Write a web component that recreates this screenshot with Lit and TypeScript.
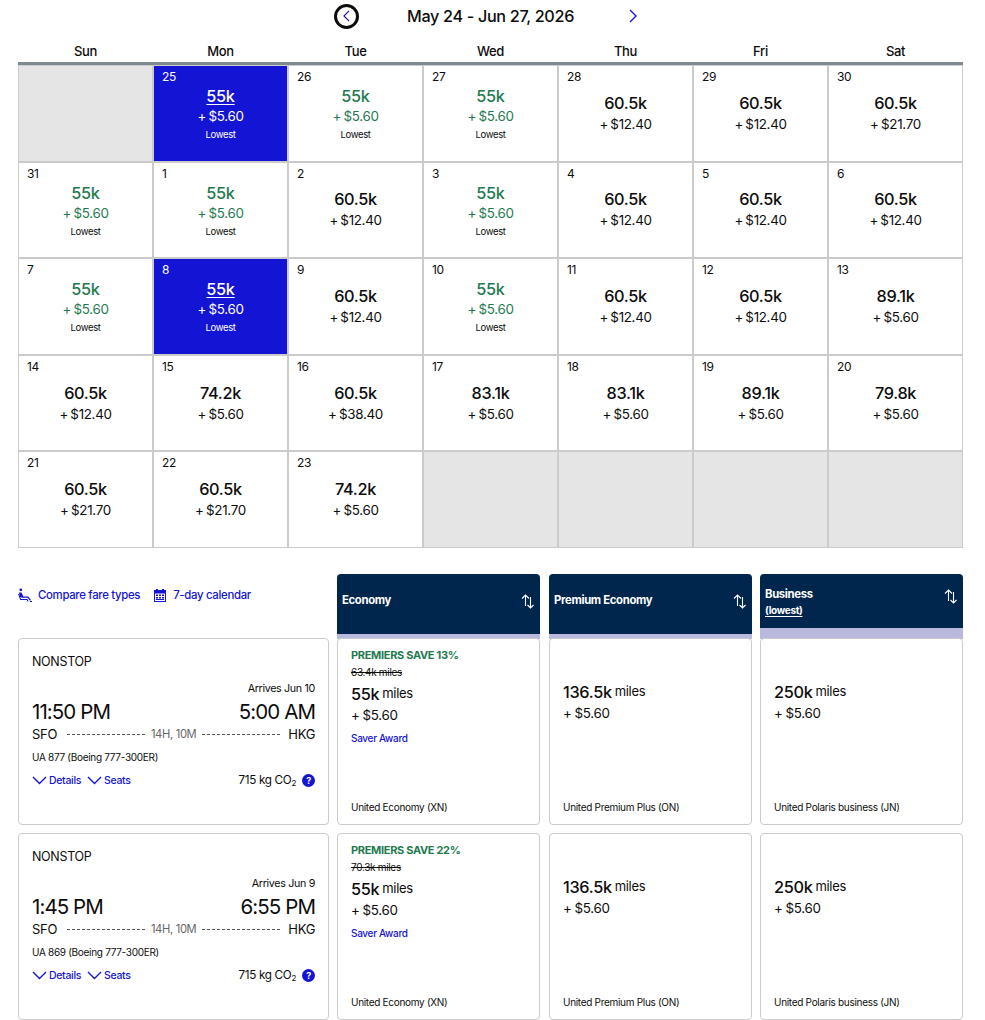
import { LitElement, html, css } from "lit";
import { customElement } from "lit/decorators.js";

type Day = { n: string; k?: string; p?: string; low?: boolean; sel?: boolean };
const d = (n: number | string, k: string, p: string, low = false, sel = false): Day => ({ n: String(n), k, p, low, sel });
const L = (n: number) => d(n, "55k", "+ $5.60", true);
const S = (n: number) => d(n, "55k", "+ $5.60", true, true);
const empty: Day = { n: "" };
const days: Day[] = [
  empty, S(25), L(26), L(27), d(28, "60.5k", "+ $12.40"), d(29, "60.5k", "+ $12.40"), d(30, "60.5k", "+ $21.70"),
  L(31), L(1), d(2, "60.5k", "+ $12.40"), L(3), d(4, "60.5k", "+ $12.40"), d(5, "60.5k", "+ $12.40"), d(6, "60.5k", "+ $12.40"),
  L(7), S(8), d(9, "60.5k", "+ $12.40"), L(10), d(11, "60.5k", "+ $12.40"), d(12, "60.5k", "+ $12.40"), d(13, "89.1k", "+ $5.60"),
  d(14, "60.5k", "+ $12.40"), d(15, "74.2k", "+ $5.60"), d(16, "60.5k", "+ $38.40"), d(17, "83.1k", "+ $5.60"), d(18, "83.1k", "+ $5.60"), d(19, "89.1k", "+ $5.60"), d(20, "79.8k", "+ $5.60"),
  d(21, "60.5k", "+ $21.70"), d(22, "60.5k", "+ $21.70"), d(23, "74.2k", "+ $5.60"), empty, empty, empty, empty,
];
const weekdays = ["Sun", "Mon", "Tue", "Wed", "Thu", "Fri", "Sat"];
const flights = [
  { arrives: "Arrives Jun 10", dep: "11:50 PM", arr: "5:00 AM", flight: "UA 877 (Boeing 777-300ER)", save: "PREMIERS SAVE 13%", was: "63.4k miles" },
  { arrives: "Arrives Jun 9", dep: "1:45 PM", arr: "6:55 PM", flight: "UA 869 (Boeing 777-300ER)", save: "PREMIERS SAVE 22%", was: "70.3k miles" },
];
const sort = html`<svg class="sort" viewBox="0 0 14 15" width="14" height="15" fill="none" stroke="currentColor" stroke-width="1.1"><path d="M4.500 12V1M1 4.500l3.500-3.500 3.500 3.500M9.500 3v11M6.500 11l3 3 3-3"/></svg>`;
const chev = html`<svg class="chev" viewBox="0 0 15 9" width="15" height="9" fill="none" stroke="currentColor" stroke-width="1.4"><path d="M1 1l6.500 6.500L14 1"/></svg>`;

@customElement("app-root")
export class AppRoot extends LitElement {
  static styles = css`
    :host { display: block; width: 985px; height: 1020px; overflow: hidden; background: #fff; color: #0c0c0c; font-family: Inter, "Noto Sans", sans-serif; letter-spacing: -0.02em; }
    .wrap { padding: 0 22px 0 18px; }
    .nav { height: 32px; display: flex; align-items: center; padding-left: 316px; }
    .prev { width: 25px; height: 25px; border: 3px solid #0c0c0c; border-radius: 50%; box-sizing: border-box; display: flex; align-items: center; justify-content: center; color: #1414a8; }
    .title { margin-left: 48px; font-size: 16.2px; font-weight: 500; white-space: nowrap; }
    .next { margin-left: 55px; color: #1414d4; display: flex; }
    .wk { display: grid; grid-template-columns: repeat(7, 135px); height: 30px; border-bottom: 3px solid #7f8a90; box-sizing: border-box; align-items: center; padding-top: 4px; margin-top: 3px; }
    .wk div { text-align: center; font-size: 13px; font-weight: 500; }
    .cal { display: grid; grid-template-columns: repeat(7, 135px); grid-auto-rows: 96.6px; height: 483px; }
    .c { box-sizing: border-box; border: 1px solid #cbcbcb; display: flex; flex-direction: column; align-items: center; justify-content: center; position: relative; background: #fff; }
    .c.e { background: #e5e5e5; }
    .c.s { background: #1414d4; color: #fff; }
    .n { position: absolute; left: 8px; top: 3px; font-size: 12px; }
    .k { font-size: 16.3px; font-weight: 500; line-height: 21px; }
    .p { font-size: 13.4px; line-height: 19px; word-spacing: -1px; margin-top: 1px; }
    .c.low { justify-content: flex-start; padding-top: 20px; }
    .c.low .p { margin-top: 0; }
    .c.low .k, .c.low .p { color: #1f7a50; }
    .c.s .k, .c.s .p { color: #fff; }
    .c.s .k { text-decoration: underline; text-underline-offset: 2px; }
    .lw { font-size: 9.5px; line-height: 14px; margin-top: 2px; }
    .mid { display: grid; grid-template-columns: 311px 204px 203px 203px; column-gap: 8px; margin-top: 26px; }
    .links { display: flex; align-items: flex-start; color: #1414d4; font-size: 11.4px; font-weight: 500; padding-top: 14px; line-height: 14px; }
    .links svg { flex: none; }
    .links span { margin-left: 6px; white-space: nowrap; }
    .links .g { margin-left: 13px; display: flex; }
    .h { height: 65px; box-sizing: border-box; background: #00264d; border-radius: 4px 4px 0 0; color: #fff; font-size: 11.3px; font-weight: 700; position: relative; padding-left: 5px; border-bottom: 5px solid #b8b9dc; display: flex; align-items: center; padding-bottom: 8px; }
    .h:nth-child(2) { margin-right: 1px; }
    .h .sort { position: absolute; right: 5px; top: 20px; }
    .h.b { border-bottom-width: 11px; display: block; padding-top: 13px; padding-bottom: 0; }
    .h.b .sort { top: 15px; }
    .h.b u { display: block; width: fit-content; font-size: 10px; margin-top: 3px; text-underline-offset: 2px; }
    .rows { display: grid; grid-template-columns: 311px 204px 203px 203px; column-gap: 8px; row-gap: 8px; margin-top: -1px; }
    .card { box-sizing: border-box; height: 187px; border: 1px solid #cbcbcb; border-radius: 4px; background: #fff; position: relative; }
    .card.eco { margin-right: 1px; }
    .f { padding: 15px 13px 0 13px; }
    .ns { font-size: 12.5px; line-height: 16px; }
    .arr { text-align: right; font-size: 10.7px; line-height: 14px; margin-top: 12px; letter-spacing: -0.03em; }
    .times { display: flex; justify-content: space-between; font-size: 20.5px; line-height: 26px; margin-top: 3px; letter-spacing: -0.045em; }
    .route { display: flex; align-items: center; font-size: 13px; line-height: 16px; margin-top: 1px; gap: 6px; }
    .dash { flex: 1; border-top: 1px dashed #555; height: 0; }
    .dur { color: #666; font-size: 11.2px; letter-spacing: -0.03em; }
    .route span:first-child { margin-right: 4px; }
    .route span:last-child { margin-left: 2px; }
    .fl { font-size: 10px; line-height: 14px; margin-top: 8px; letter-spacing: -0.03em; }
    .foot { display: flex; align-items: center; margin-top: 9px; color: #1414d4; font-size: 10.5px; font-weight: 500; }
    .foot span { margin: 0 6px 0 2px; }
    .co2 { margin-left: auto; color: #0c0c0c; font-size: 11.7px; font-weight: 400; display: flex; align-items: center; }
    .co2 sub { font-size: 8px; line-height: 0; position: relative; top: 3px; vertical-align: baseline; }
    .q { width: 13px; height: 13px; border-radius: 50%; background: #1414d4; color: #fff; font-size: 9px; font-weight: 700; display: flex; align-items: center; justify-content: center; margin-left: 6px; }
    .sv { position: absolute; left: 13px; top: 9px; color: #1f7a50; font-size: 11px; font-weight: 700; line-height: 14px; }
    .was { position: absolute; left: 13px; top: 27px; font-size: 10px; line-height: 12px; text-decoration: line-through; }
    .pr { position: absolute; left: 13px; top: 45px; }
    .pr.plain { top: 43px; }
    .m { font-size: 16.3px; font-weight: 500; line-height: 20px; }
    .m small { font-size: 13px; font-weight: 400; position: relative; top: -2px; margin-left: -1px; }
    .t { font-size: 13.4px; line-height: 20px; word-spacing: -0.5px; }
    .sa { position: absolute; left: 13px; top: 93px; color: #1414d4; font-size: 10px; font-weight: 500; line-height: 12px; }
    .tp { position: absolute; left: 13px; bottom: 10px; font-size: 10px; line-height: 13px; letter-spacing: -0.03em; }
  `;

  private day(x: Day) {
    if (!x.n) return html`<div class="c e"></div>`;
    const cls = `c${x.low ? " low" : ""}${x.sel ? " s" : ""}`;
    return html`<div class=${cls}><span class="n">${x.n}</span><div class="k">${x.k}</div><div class="p">${x.p}</div>${x.low ? html`<div class="lw">Lowest</div>` : ""}</div>`;
  }

  private fares(f: (typeof flights)[number]) {
    return html`
      <div class="card eco">
        <div class="sv">${f.save}</div><div class="was">${f.was}</div>
        <div class="pr"><div class="m">55k <small>miles</small></div><div class="t">+ $5.60</div></div>
        <div class="sa">Saver Award</div>
        <div class="tp">United Economy (XN)</div>
      </div>
      <div class="card"><div class="pr plain"><div class="m">136.5k <small>miles</small></div><div class="t">+ $5.60</div></div><div class="tp">United Premium Plus (ON)</div></div>
      <div class="card"><div class="pr plain"><div class="m">250k <small>miles</small></div><div class="t">+ $5.60</div></div><div class="tp">United Polaris business (JN)</div></div>`;
  }

  render() {
    return html`<div class="wrap">
      <div class="nav">
        <div class="prev"><svg viewBox="0 0 8 14" width="7" height="12" fill="none" stroke="currentColor" stroke-width="1.3"><path d="M7 1L1 7l6 6"/></svg></div>
        <div class="title">May 24 - Jun 27, 2026</div>
        <div class="next"><svg viewBox="0 0 8 14" width="8" height="14" fill="none" stroke="currentColor" stroke-width="1.4"><path d="M1 1l6 6-6 6"/></svg></div>
      </div>
      <div class="wk">${weekdays.map((w) => html`<div>${w}</div>`)}</div>
      <div class="cal">${days.map((x) => this.day(x))}</div>
      <div class="mid">
        <div class="links">
          <svg viewBox="0 0 14 14" width="14" height="14" fill="currentColor"><circle cx="2.800" cy="1.800" r="1.400"/><path d="M1 4.500h2.500l1.800 4h3.700l1.200 0 2.800 3.500-1 .8-2.400-3H4.500L1.800 9z"/><path d="M0 6h1l2 5h6.500l1 2.500h-1.200L8.800 12H2.300zM12 13h2v1h-2z"/></svg><span>Compare fare types</span>
          <div class="g"><svg viewBox="0 0 14 14" width="14" height="14" fill="currentColor"><path d="M1 2h2V1h2v1h4V1h2v1h2v12H1zM2 5.500v7.500h10V5.500z"/><path d="M3 6.500h2v1.500H3zm3 0h2v1.500H6zm3 0h2v1.500H9zm-6 2.500h2v1.500H3zm3 0h2v1.500H6zm3 0h2v1.500H9zm-6 2h8v1H3z"/></svg><span>7-day calendar</span></div>
        </div>
        <div class="h">Economy${sort}</div>
        <div class="h">Premium Economy${sort}</div>
        <div class="h b">Business<u>(lowest)</u>${sort}</div>
      </div>
      <div class="rows">
        ${flights.map((f) => html`
          <div class="card f">
            <div class="ns">NONSTOP</div>
            <div class="arr">${f.arrives}</div>
            <div class="times"><span>${f.dep}</span><span>${f.arr}</span></div>
            <div class="route"><span>SFO</span><div class="dash"></div><span class="dur">14H, 10M</span><div class="dash"></div><span>HKG</span></div>
            <div class="fl">${f.flight}</div>
            <div class="foot">${chev}<span>Details</span>${chev}<span>Seats</span>
              <div class="co2">715 kg CO<sub>2</sub><div class="q">?</div></div></div>
          </div>${this.fares(f)}`)}
      </div>
    </div>`;
  }
}
